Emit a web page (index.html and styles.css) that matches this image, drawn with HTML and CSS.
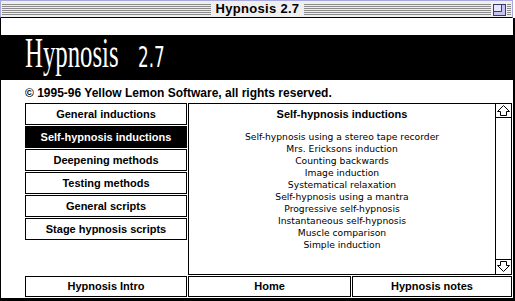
FILE: index.html
```html
<!DOCTYPE html>
<html lang="en">
<head>
<meta charset="utf-8">
<title>Hypnosis 2.7</title>
<link rel="stylesheet" href="styles.css">
</head>
<body>
<div class="window">
  <div class="titlebar">
    <div class="stripes stripes-left"></div>
    <div class="title">Hypnosis 2.7</div>
    <div class="stripes stripes-right"></div>
    <svg class="zoombox" width="13" height="12" viewBox="0 0 13 12">
      <rect x="0.5" y="0.5" width="12" height="11" fill="#c4c4ee" stroke="#3a3a66"/>
      <rect x="1" y="1" width="7" height="6" fill="#e6e6fa"/>
      <polyline points="8.5,1 8.5,7.5 1,7.5" fill="none" stroke="#3a3a66"/>
    </svg>
    <div class="stripes stripes-end"></div>
  </div>
  <div class="content">
    <div class="banner">
      <span class="logo-word"><span class="logo-inner">Hypnosis</span></span>
      <span class="logo-ver"><span class="ver-inner">2.7</span></span>
    </div>
    <div class="copyright">© 1995-96 Yellow Lemon Software, all rights reserved.</div>
    <div class="main">
      <nav class="menu">
        <div class="btn">General inductions</div>
        <div class="btn selected">Self-hypnosis inductions</div>
        <div class="btn">Deepening methods</div>
        <div class="btn">Testing methods</div>
        <div class="btn">General scripts</div>
        <div class="btn">Stage hypnosis scripts</div>
      </nav>
      <div class="panel">
        <div class="panel-text">
          <div class="panel-title">Self-hypnosis inductions</div>
          <ul class="list">
            <li>Self-hypnosis using a stereo tape recorder</li>
            <li>Mrs. Ericksons induction</li>
            <li>Counting backwards</li>
            <li>Image induction</li>
            <li>Systematical relaxation</li>
            <li>Self-hypnosis using a mantra</li>
            <li>Progressive self-hypnosis</li>
            <li>Instantaneous self-hypnosis</li>
            <li>Muscle comparison</li>
            <li>Simple induction</li>
          </ul>
        </div>
        <div class="scrollbar">
          <div class="arrow arrow-up">
            <svg width="15" height="13" viewBox="0 0 15 13"><polygon points="7.5,1.5 13.5,7.5 10.5,7.5 10.5,11.5 4.5,11.5 4.5,7.5 1.5,7.5" fill="#fff" stroke="#000"/></svg>
          </div>
          <div class="track"></div>
          <div class="arrow arrow-down">
            <svg width="15" height="13" viewBox="0 0 15 13"><polygon points="7.5,11.5 13.5,5.5 10.5,5.5 10.5,1.5 4.5,1.5 4.5,5.5 1.5,5.5" fill="#fff" stroke="#000"/></svg>
          </div>
        </div>
      </div>
    </div>
    <div class="bottom">
      <div class="btn btn-intro">Hypnosis Intro</div>
      <div class="btn btn-home">Home</div>
      <div class="btn btn-notes">Hypnosis notes</div>
    </div>
  </div>
</div>
</body>
</html>
```

FILE: styles.css
```css
* { box-sizing: border-box; margin: 0; padding: 0; }
html, body { background: #fff; }
body {
  width: 515px;
  height: 301px;
  overflow: hidden;
  font-family: "Liberation Sans", Arial, sans-serif;
  color: #000;
}
.window {
  width: 515px;
  height: 301px;
  display: flex;
  flex-direction: column;
}
.titlebar {
  width: 513px;
  height: 18px;
  flex: none;
  border: 1px solid #a8a8dc;
  border-bottom: 1px solid #000;
  background: #efefef;
  display: flex;
  align-items: flex-start;
  padding: 0 1px;
}
.stripes {
  margin-top: 3px;
  height: 11px;
  background: repeating-linear-gradient(to bottom, #8a8a8a 0 1px, transparent 1px 2px);
}
.stripes-left { width: 209px; flex: none; }
.stripes-right { flex: 1; }
.stripes-end { width: 4px; flex: none; }
.title {
  width: 93px;
  flex: none;
  height: 16px;
  line-height: 16px;
  font-size: 13px;
  font-weight: bold;
  letter-spacing: 0.3px;
  text-align: center;
  white-space: nowrap;
}
.zoombox {
  display: block;
  flex: none;
  margin: 3px 1px 0 2px;
}
.content {
  flex: 1;
  border-left: 1px solid #000;
  border-right: 2px solid #000;
  border-bottom: 3px solid #000;
  padding-top: 17px;
  display: flex;
  flex-direction: column;
}
.banner {
  height: 45px;
  flex: none;
  background: #000;
  color: #fff;
  padding: 2px 0 0 24px;
  display: flex;
  align-items: baseline;
}
.logo-word {
  display: inline-block;
  width: 94px;
  font-family: "Liberation Serif", "Times New Roman", serif;
  font-size: 42px;
  line-height: 33px;
  white-space: nowrap;
}
.logo-inner {
  display: inline-block;
  transform: scaleX(0.59);
  transform-origin: left center;
}
.logo-ver {
  display: inline-block;
  margin-left: 19px;
  font-family: "DejaVu Sans", "Liberation Sans", sans-serif;
  font-size: 28px;
  font-weight: normal;
  line-height: 33px;
  white-space: nowrap;
}
.ver-inner {
  display: inline-block;
  transform: scaleX(0.6);
  transform-origin: left center;
}
.copyright {
  height: 23px;
  flex: none;
  padding: 6px 0 0 24px;
  font-size: 12px;
  font-weight: bold;
  line-height: 14px;
  white-space: nowrap;
}
.main {
  height: 172px;
  flex: none;
  display: flex;
  gap: 1px;
  padding-left: 24px;
}
.menu {
  width: 162px;
  display: flex;
  flex-direction: column;
  gap: 1px;
}
.btn {
  height: 22px;
  border: 1px solid #000;
  background: #fff;
  font-size: 11px;
  font-weight: bold;
  line-height: 20px;
  text-align: center;
  white-space: nowrap;
}
.btn.selected {
  background: #000;
  color: #fff;
}
.panel {
  width: 324px;
  border: 1px solid #000;
  display: flex;
}
.panel-text {
  flex: 1;
  padding-top: 4px;
  text-align: center;
}
.panel-title {
  font-size: 11px;
  font-weight: bold;
  line-height: 12px;
}
.list {
  list-style: none;
  margin-top: 11px;
  font-family: "DejaVu Sans", Verdana, sans-serif;
  font-size: 9.2px;
  line-height: 12px;
}
.scrollbar {
  width: 16px;
  border-left: 1px solid #000;
  display: flex;
  flex-direction: column;
}
.arrow svg { display: block; }
.arrow-up {
  height: 14px;
  border-bottom: 1px solid #000;
}
.track { flex: 1; }
.arrow-down {
  height: 15px;
  border-top: 1px solid #000;
}
.bottom {
  margin-top: 1px;
  height: 21px;
  flex: none;
  display: flex;
  gap: 1px;
  padding-left: 24px;
}
.bottom .btn {
  height: 21px;
  line-height: 19px;
}
.btn-intro { width: 162px; }
.btn-home { width: 163px; }
.btn-notes { width: 160px; }
```
